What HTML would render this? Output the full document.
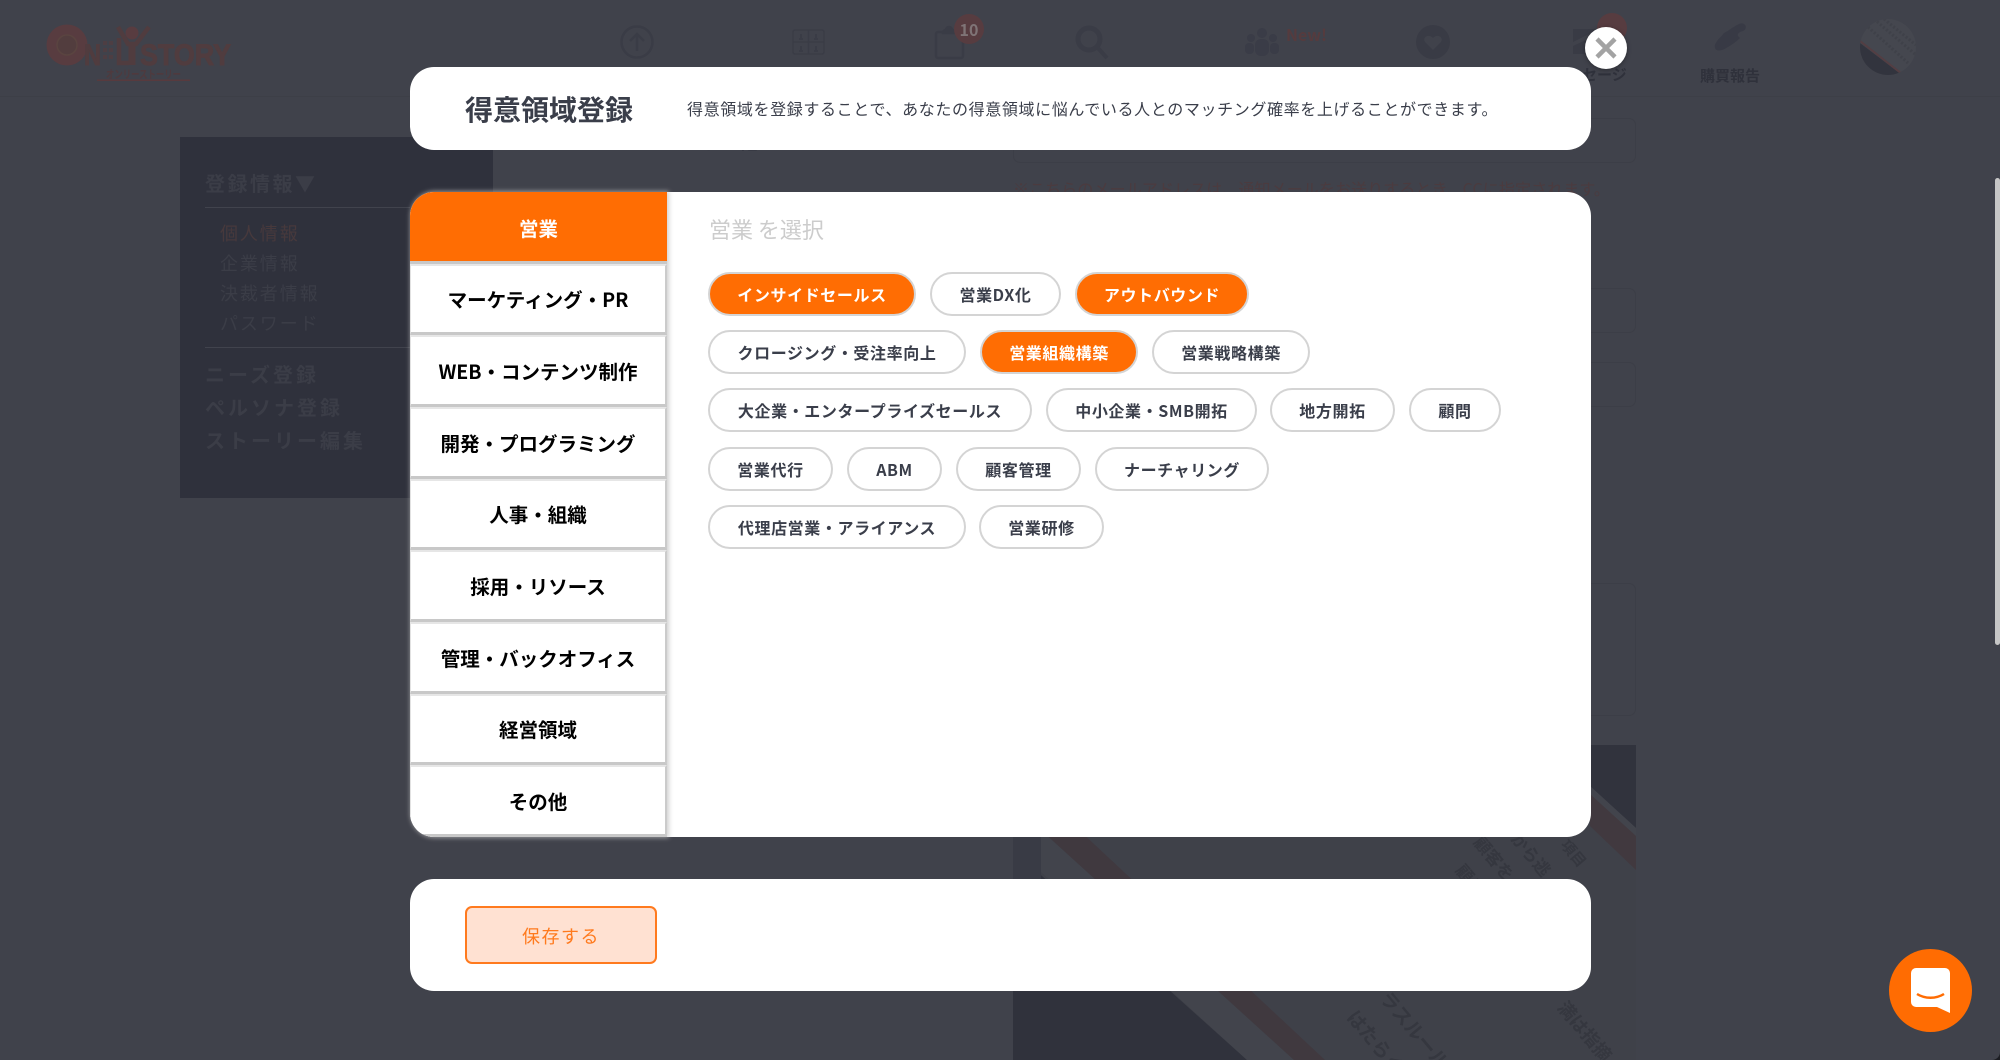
<!DOCTYPE html>
<html lang="ja"><head><meta charset="utf-8"><title>得意領域登録</title>
<style>
*{box-sizing:border-box;margin:0;padding:0}
html,body{width:2000px;height:1060px;overflow:hidden;background:#40424b}
body{position:relative;font-family:"Noto Sans CJK JP","Liberation Sans",sans-serif}
.a{position:absolute;white-space:nowrap}
.card{position:absolute;left:410px;width:1181px;background:#fff;border-radius:24px}
.side1{font-size:20px;font-weight:700;letter-spacing:3px;color:#3b3d47;left:205px;line-height:30px}
.side2{font-size:18px;letter-spacing:1.9px;color:#3b3d47;left:220px;line-height:26px}
.inp{position:absolute;left:1013px;width:623px;border:1px solid #3c3e47;border-radius:7px}
#tabs{position:absolute;left:410px;top:192px;width:257px;height:645px;border-radius:24px 0 0 24px;overflow:hidden;background:#fff}
#tabsh{position:absolute;left:410px;top:192px;width:257px;height:645px;border-radius:24px 0 0 24px;box-shadow:1px 0 5px 1px rgba(190,190,190,.7)}
.tab{height:71.67px;display:flex;align-items:center;justify-content:center;font-size:19.5px;font-weight:700;color:#000;background:#fff;border-top:2px solid #e6e6e6;border-bottom:3px solid #c8c8c8;border-right:2px solid #cbcbcb;border-left:1px solid #e2e2e2}
.tab.on{background:#ff6d03;color:#fff;border-top:0;border-left:0;border-right:0;padding-top:2px}
.pill{position:absolute;height:44px;border:2px solid #d4d4d4;border-radius:22px;background:#fff;font-size:16px;font-weight:700;color:#3a3e4a;display:flex;align-items:center;justify-content:center;letter-spacing:.6px}
.pill.on{background:#ff6d03;color:#fff;font-weight:700}
.dt{position:absolute;color:#35373f;font-size:17px;transform:rotate(50deg);transform-origin:left top;white-space:nowrap;font-weight:700}
</style></head><body>

<!-- dimmed page: header -->
<div class="a" style="left:0;top:96px;width:2000px;height:1px;background:#3d3f47"></div>
<svg class="a" style="left:40px;top:20px" width="200" height="66" viewBox="0 0 200 66" font-family="Liberation Sans,Noto Sans CJK JP,sans-serif" font-weight="700">
 <circle cx="27" cy="25" r="20.500" fill="#583c40"/><circle cx="27" cy="25" r="10" fill="#523d3e" stroke="#5a4440" stroke-width="1.500"/>
 <text x="44" y="45" font-size="30" fill="#503c3f" stroke="#503c3f" stroke-width="1" textLength="17" lengthAdjust="spacingAndGlyphs">N</text>
 <g fill="#4d3e43"><rect x="63" y="21" width="4" height="4"/><rect x="69" y="21" width="4" height="4"/><rect x="63" y="28" width="4" height="4"/><rect x="69" y="28" width="4" height="4"/><rect x="63" y="35" width="4" height="4"/><rect x="69" y="35" width="4" height="4"/></g>
 <path d="M79 18v25h10" stroke="#503c3f" stroke-width="4.500" fill="none"/>
 <path d="M78 7L88 24H96L109 7" stroke="#503c3f" stroke-width="4.500" fill="none"/><path d="M92 22V45" stroke="#503c3f" stroke-width="7"/><circle cx="92" cy="13" r="6.500" fill="#583c40"/>
 <text x="100" y="45" font-size="30" fill="#503c3f" stroke="#503c3f" stroke-width="1" textLength="91" lengthAdjust="spacingAndGlyphs">STORY</text>
 <text x="66" y="58" font-size="11" fill="#4f3a3e" textLength="75" lengthAdjust="spacingAndGlyphs">オンリーストーリー</text>
 <rect x="57" y="59.500" width="93" height="1.500" fill="#583a3e"/>
</svg>
<svg class="a" style="left:620px;top:25px" width="34" height="34" viewBox="0 0 34 34" fill="none" stroke="#3a3c46" stroke-width="2.500"><circle cx="17" cy="17" r="15.500"/><path d="M17 26V9M10 16l7-7 7 7"/></svg>
<svg class="a" style="left:792px;top:29px" width="33" height="26" viewBox="0 0 33 26" fill="none" stroke="#3a3c46" stroke-width="1.500"><rect x="1" y="1" width="31" height="24" rx="2"/><path d="M16.500 1v24M1 13h31"/><path d="M7 10h4M22 10h4M7 22h4M22 22h4M9 5v4M24 5v4M9 17v4M24 17v4" stroke-width="2"/></svg>
<svg class="a" style="left:934px;top:24px" width="32" height="36" viewBox="0 0 32 36" fill="none" stroke="#3a3c46" stroke-width="2.500"><rect x="2" y="8" width="27" height="26" rx="2"/><path d="M9 9c0-3 3-3 3-3 0-4 6-4 6 0 0 0 3 0 3 3z" fill="#3a3c46"/></svg>
<div class="a" style="left:954px;top:14px;width:30px;height:30px;border-radius:50%;background:#573c40;color:#7f7476;font-size:16px;font-weight:700;line-height:30px;text-align:center">10</div>
<svg class="a" style="left:1074px;top:24px" width="36" height="36" viewBox="0 0 36 36" fill="none" stroke="#3a3c46"><circle cx="15" cy="15" r="11" stroke-width="5"/><path d="M23 23l10 11" stroke-width="4"/></svg>
<svg class="a" style="left:1245px;top:28px" width="34" height="28" viewBox="0 0 34 28" fill="#3a3c47"><circle cx="17" cy="5" r="5"/><circle cx="6" cy="10" r="4"/><circle cx="28" cy="10" r="4"/><rect x="10" y="11" width="14" height="17" rx="6"/><rect x="0" y="15" width="9" height="11" rx="4"/><rect x="25" y="15" width="9" height="11" rx="4"/></svg>
<div class="a" style="left:1286px;top:23px;font-size:16px;font-weight:700;color:#553b3e;line-height:22px">New!</div>
<svg class="a" style="left:1416px;top:25px" width="34" height="34" viewBox="0 0 34 34"><circle cx="17" cy="17" r="17" fill="#393b45"/><path d="M17 25l-8-8c-3-4 3-9 8-4 5-5 11 0 8 4z" fill="#40424b"/></svg>
<svg class="a" style="left:1572px;top:28px" width="28" height="28" viewBox="0 0 28 28"><path d="M1 1h26L1 14zM1 18l26-12v20H1z" fill="#393b45"/></svg>
<div class="a" style="left:1597px;top:13px;width:30px;height:30px;border-radius:50%;background:#573c40"></div>
<div class="a" style="left:1552px;top:64px;font-size:15px;font-weight:700;color:#2f313b;line-height:22px">メッセージ</div>
<svg class="a" style="left:1712px;top:22px" width="36" height="36" viewBox="0 0 36 36" fill="#383a45"><path d="M12 11c4-2 5-3 8-5 5-3 9-6 12-4 3 2 2 6-1 7-4 1-6 3-5 5l2 2c-3 3-7 6-12 9-6 4-12 5-13 1-1-3 1-5 2-7 2-3 5-5 7-8z"/></svg>
<div class="a" style="left:1700px;top:65px;font-size:15px;font-weight:700;color:#2f313b;line-height:22px">購買報告</div>
<svg class="a" style="left:1860px;top:19px" width="56" height="56" viewBox="0 0 56 56"><defs><clipPath id="av"><circle cx="28" cy="28" r="28"/></clipPath></defs><g clip-path="url(#av)"><rect width="56" height="56" fill="#45474f"/><path d="M0 24L42 56H0z" fill="#32343e"/><path d="M0 22l42 33" stroke="#533e43" stroke-width="2"/><path d="M14 0l42 36M24 0l32 26M8 8l40 36" stroke="#3f4149" stroke-width="3" stroke-dasharray="2 2"/></g></svg>

<!-- dimmed sidebar -->
<div class="a" style="left:180px;top:137px;width:313px;height:361px;background:#2f313c"></div>
<div class="a side1" style="top:168px;letter-spacing:2.5px">登録情報▼</div>
<div class="a" style="left:205px;top:207px;width:205px;height:1px;background:#41434d"></div>
<div class="a side2" style="top:220px;color:#47393c">個人情報</div>
<div class="a side2" style="top:250px">企業情報</div>
<div class="a side2" style="top:280px">決裁者情報</div>
<div class="a side2" style="top:310px">パスワード</div>
<div class="a" style="left:205px;top:347px;width:205px;height:1px;background:#41434d"></div>
<div class="a side1" style="top:359px">ニーズ登録</div>
<div class="a side1" style="top:392px">ペルソナ登録</div>
<div class="a side1" style="top:425px">ストーリー編集</div>

<!-- dimmed form -->
<div class="a" style="left:695px;top:126px;font-size:20px;letter-spacing:2px;color:#30323c;line-height:30px">その他のメールアドレス</div>
<div class="inp" style="top:118px;height:45px"></div>
<div class="a" style="left:1013px;top:176px;font-size:16px;letter-spacing:.1px;color:#4b3b3f;line-height:24px">※こちらのメールアドレスは、通知メールをお送りするとき、CCに指定されます。</div>
<div class="inp" style="top:288px;height:45px"></div>
<div class="inp" style="top:362px;height:45px"></div>
<div class="inp" style="top:583px;height:133px"></div>
<svg class="a" style="left:1013px;top:745px" width="623" height="315" viewBox="1013 745 623 315">
 <rect x="1013" y="745" width="623" height="315" fill="#3f4149"/>
 <path d="M1013 850L1247 1060H1013z" fill="#30323c"/>
 <path d="M995 830L1247 1060H1294L1041 830z" fill="#42444c"/>
 <path d="M1041 830L1294 1060H1325L1079 830z" fill="#40393f"/>
 <path d="M1480 745H1636V828L1590 786z" fill="#31333d"/>
 <path d="M1590 786L1636 828V838L1590 796z" fill="#42444c"/>
 <path d="M1590 794L1636 836V870L1590 826z" fill="#41393f"/>
 <rect x="1013" y="830" width="28" height="50" fill="#393b45"/>
</svg>
<div class="dt" style="left:1572px;top:995px;font-size:18px">満は指摘</div>
<div class="dt" style="left:1395px;top:985px;font-size:19px">ラスルール</div>
<div class="dt" style="left:1362px;top:1004px;font-size:19px">はたらく</div>
<div class="dt" style="left:1525px;top:826px;font-size:17px">から逃</div>
<div class="dt" style="left:1488px;top:830px;font-size:17px">顧客を</div>
<div class="dt" style="left:1470px;top:858px;font-size:17px">顧身</div>
<div class="dt" style="left:1572px;top:835px;font-size:15px">項目</div>

<!-- modal -->
<div class="card" style="top:67px;height:83px"></div>
<div class="a" style="left:465px;top:88px;font-size:28px;font-weight:700;color:#3a3e4a;line-height:42px">得意領域登録</div>
<div class="a" style="left:687px;top:96px;font-size:16px;letter-spacing:.63px;color:#3a3e4a;line-height:24px">得意領域を登録することで、あなたの得意領域に悩んでいる人とのマッチング確率を上げることができます。</div>

<div class="card" style="top:192px;height:645px"></div>
<div id="tabsh"></div>
<div id="tabs">
 <div class="tab on">営業</div>
 <div class="tab">マーケティング・PR</div>
 <div class="tab">WEB・コンテンツ制作</div>
 <div class="tab">開発・プログラミング</div>
 <div class="tab">人事・組織</div>
 <div class="tab">採用・リソース</div>
 <div class="tab">管理・バックオフィス</div>
 <div class="tab">経営領域</div>
 <div class="tab">その他</div>
</div>

<div class="a" style="left:709px;top:214px;font-size:22px;color:#ccc;line-height:30px">営業 を選択</div>

<div class="pill on" style="left:708px;top:272px;width:208px">インサイドセールス</div>
<div class="pill" style="left:930px;top:272px;width:131px">営業DX化</div>
<div class="pill on" style="left:1075px;top:272px;width:174px">アウトバウンド</div>

<div class="pill" style="left:708px;top:330px;width:258px">クロージング・受注率向上</div>
<div class="pill on" style="left:980px;top:330px;width:158px">営業組織構築</div>
<div class="pill" style="left:1152px;top:330px;width:158px">営業戦略構築</div>

<div class="pill" style="left:708px;top:388px;width:324px">大企業・エンタープライズセールス</div>
<div class="pill" style="left:1046px;top:388px;width:211px">中小企業・SMB開拓</div>
<div class="pill" style="left:1270px;top:388px;width:125px">地方開拓</div>
<div class="pill" style="left:1409px;top:388px;width:92px">顧問</div>

<div class="pill" style="left:708px;top:447px;width:125px">営業代行</div>
<div class="pill" style="left:847px;top:447px;width:95px">ABM</div>
<div class="pill" style="left:956px;top:447px;width:125px">顧客管理</div>
<div class="pill" style="left:1095px;top:447px;width:174px">ナーチャリング</div>

<div class="pill" style="left:708px;top:505px;width:258px">代理店営業・アライアンス</div>
<div class="pill" style="left:979px;top:505px;width:125px">営業研修</div>

<div class="card" style="top:879px;height:112px"></div>
<div class="a" style="left:465px;top:906px;width:192px;height:58px;border:2px solid #ff7a1e;border-radius:7px;background:#ffe1d2;color:#ff7a1e;font-size:18px;letter-spacing:1.5px;text-align:center;line-height:56px">保存する</div>

<!-- close -->
<div class="a" style="left:1585px;top:27px;width:42px;height:42px;border-radius:50%;background:#fff;box-shadow:0 1px 5px rgba(0,0,0,.35)"></div>
<svg class="a" style="left:1585px;top:27px" width="42" height="42" viewBox="0 0 42 42"><path d="M12 12l18 18M30 12L12 30" stroke="#a3a3a3" stroke-width="4.500" stroke-linecap="butt"/></svg>

<!-- chat -->
<div class="a" style="left:1889px;top:949px;width:83px;height:83px;border-radius:50%;background:#ff6c02"></div>
<svg class="a" style="left:1911px;top:967px" width="40" height="47" viewBox="0 0 40 47"><path d="M5 1h29a5 5 0 0 1 5 5v40l-13-6H5a5 5 0 0 1-5-5V6a5 5 0 0 1 5-5z" fill="#fff"/><path d="M6 27c8 5 19 5 27 0" stroke="#ff6c02" stroke-width="2.500" fill="none"/></svg>

<!-- scrollbar and window corner -->
<div class="a" style="left:1995px;top:178px;width:5px;height:467px;border-radius:3px;background:#c6c6c6"></div>
<svg class="a" style="left:1992px;top:1052px" width="8" height="8"><path d="M8 0v8H0a8 8 0 0 0 8-8z" fill="#1c1d22"/></svg>
</body></html>
